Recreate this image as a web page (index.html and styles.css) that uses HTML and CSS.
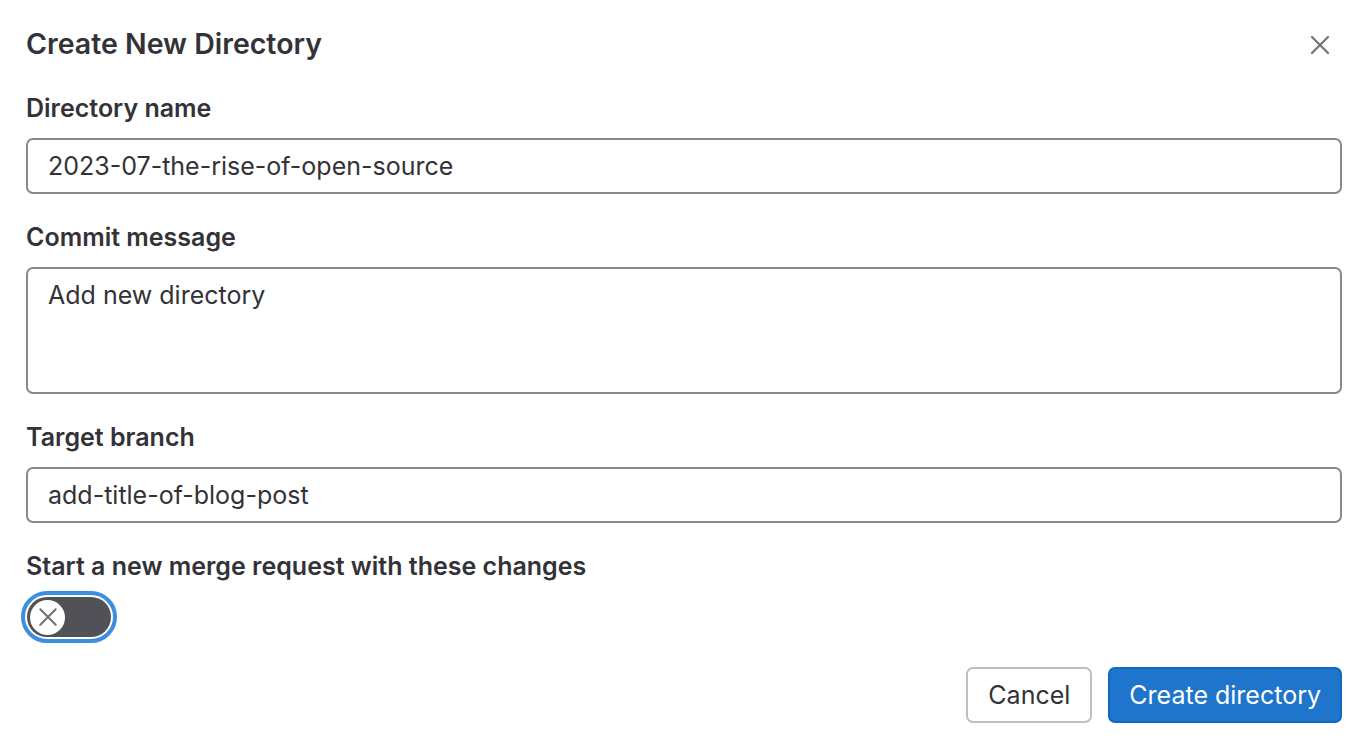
FILE: index.html
```html
<!DOCTYPE html>
<html>
<head>
<meta charset="utf-8">
<link rel="stylesheet" href="styles.css">
</head>
<body>
<div class="modal">
  <div class="header">
    <h2 class="title">Create New Directory</h2>
    <button class="close" aria-label="Close">
      <svg width="20" height="20" viewBox="0 0 20 20"><path d="M2 2 L18 18 M18 2 L2 18" stroke="#737278" stroke-width="2.2" stroke-linecap="round" fill="none"/></svg>
    </button>
  </div>
  <div class="group">
    <label class="label">Directory name</label>
    <div class="input">2023-07-the-rise-of-open-source</div>
  </div>
  <div class="group">
    <label class="label">Commit message</label>
    <div class="input textarea">Add new directory</div>
  </div>
  <div class="group">
    <label class="label">Target branch</label>
    <div class="input">add-title-of-blog-post</div>
  </div>
  <div class="group last">
    <label class="label">Start a new merge request with these changes</label>
    <div class="toggle-wrap">
      <div class="toggle">
        <div class="knob">
          <svg width="22" height="22" viewBox="0 0 20 20"><path d="M3 3 L17 17 M17 3 L3 17" stroke="#737278" stroke-width="1.9" stroke-linecap="round" fill="none"/></svg>
        </div>
      </div>
    </div>
  </div>
  <div class="footer">
    <button class="btn cancel">Cancel</button>
    <button class="btn primary">Create directory</button>
  </div>
</div>
</body>
</html>
```
FILE: styles.css
```css
html, body {
  margin: 0;
  padding: 0;
  background: #ffffff;
}
body {
  font-family: Inter, "Noto Sans", "Liberation Sans", sans-serif;
  color: #333238;
}
.modal {
  padding: 0 24px 0 26px;
}
.header {
  height: 92px;
  display: flex;
  align-items: flex-start;
  justify-content: space-between;
}
.title {
  margin: 0;
  margin-top: 26px;
  font-size: 28.5px;
  line-height: 36px;
  font-weight: 600;
}
.close {
  margin-top: 34px;
  margin-right: 11px;
  width: 22px;
  height: 22px;
  padding: 0;
  border: none;
  background: none;
  display: flex;
  align-items: center;
  justify-content: center;
}
.group {
  display: flex;
  flex-direction: column;
  margin-bottom: 27px;
}
.label {
  font-size: 25px;
  line-height: 32px;
  font-weight: 600;
  margin-bottom: 14px;
}
.input {
  height: 56px;
  box-sizing: border-box;
  border: 2px solid #89888d;
  border-radius: 7px;
  padding: 0 20px;
  font-size: 25px;
  display: flex;
  align-items: center;
  color: #333238;
}
.textarea {
  height: 127px;
  align-items: flex-start;
  padding-top: 10px;
  line-height: 32px;
}
.group.last {
  margin-bottom: 0;
  align-items: flex-start;
}
.group.last .label {
  margin-bottom: 9px;
}
.toggle-wrap {
  width: 96px;
  height: 52px;
  box-sizing: border-box;
  border: 4px solid #3b8ee0;
  border-radius: 26px;
  padding: 2px;
  margin-left: -5px;
}
.toggle {
  width: 100%;
  height: 100%;
  background: #535158;
  border-radius: 20px;
  display: flex;
  align-items: center;
  padding-left: 3px;
  box-sizing: border-box;
}
.knob {
  width: 35px;
  height: 35px;
  border-radius: 50%;
  background: #ffffff;
  display: flex;
  align-items: center;
  justify-content: center;
}
.footer {
  display: flex;
  justify-content: flex-end;
  gap: 16px;
  margin-top: 24px;
}
.btn {
  height: 56px;
  box-sizing: border-box;
  border-radius: 7px;
  font-family: Inter, "Noto Sans", "Liberation Sans", sans-serif;
  font-size: 25px;
  padding: 0 20px;
}
.cancel {
  background: #ffffff;
  border: 2px solid #bfbfc3;
  color: #333238;
}
.primary {
  background: #1f75cb;
  border: 2px solid #1068bf;
  color: #ffffff;
  padding: 0 19px;
}
```
